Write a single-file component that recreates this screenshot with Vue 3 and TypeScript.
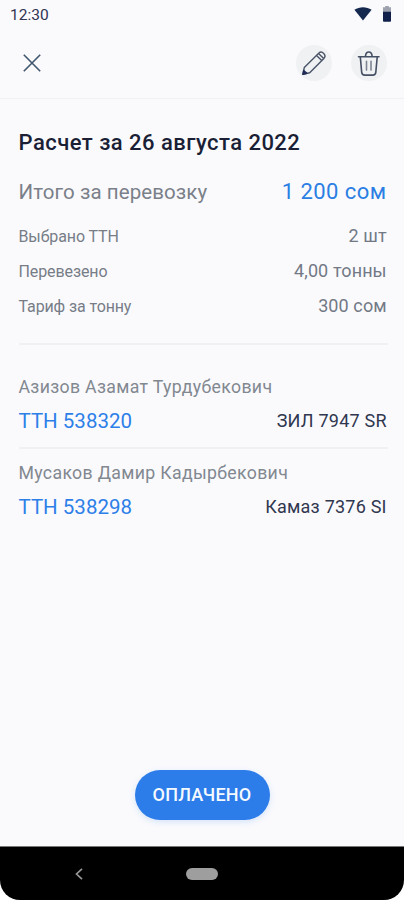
<script setup lang="ts">
interface Row { label: string; value: string; cls: string }
interface Waybill { driver: string; number: string; vehicle: string }

const rows: Row[] = [
  { label: 'Выбрано ТТН', value: '2 шт', cls: 'count' },
  { label: 'Перевезено', value: '4,00 тонны', cls: 'weight' },
  { label: 'Тариф за тонну', value: '300 сом', cls: 'rate' },
]

const waybills: Waybill[] = [
  { driver: 'Азизов Азамат Турдубекович', number: 'ТТН 538320', vehicle: 'ЗИЛ 7947 SR' },
  { driver: 'Мусаков Дамир Кадырбекович', number: 'ТТН 538298', vehicle: 'Камаз 7376 SI' },
]
</script>

<template>
  <div class="screen">
    <div class="status">
      <span class="time">12:30</span>
      <div class="status-icons">
        <svg class="wifi" width="18" height="14" viewBox="0 0 18 14"><path d="M0.4 2.8C5.4-.7 12.6-.7 17.6 2.8L9 13.4Z" fill="#15294f" /></svg>
        <svg class="battery" width="8" height="16" viewBox="0 0 8 16">
          <path d="M2.2 0h3.6v1.3H8V6H0V1.3h2.2z" fill="#9da2ae" />
          <path d="M0 5.7h8v9.1q0 .9-.9.9H.9Q0 15.700 0 14.800z" fill="#10204a" />
        </svg>
      </div>
    </div>

    <header class="toolbar">
      <button class="close" aria-label="Закрыть">
        <svg width="18" height="18" viewBox="0 0 18 18"><path d="M.8.8l16.400 16.400M17.200.8L.8 17.200" fill="none" stroke="#40566c" stroke-width="1.600" /></svg>
      </button>
      <div class="actions">
        <button class="round" aria-label="Изменить">
          <svg width="36" height="36" viewBox="0 0 36 36" fill="none" stroke="#4a5468" stroke-width="1.400" stroke-linejoin="round">
            <path d="M6.900 29.300l1.400-6.800L22.700 8.200q2.500-2.300 5 .2t.2 5L13.700 27.700z" />
            <path d="M20.500 10.400l5.200 5.200M22.500 8.400l5.200 5.200" />
            <path d="M6.900 29.300l.8-3.900 3.100 2.900z" fill="#202c58" stroke="#202c58" />
          </svg>
        </button>
        <button class="round" aria-label="Удалить">
          <svg width="36" height="36" viewBox="0 0 36 36" fill="none" stroke="#465064" stroke-width="1.600" stroke-linecap="round" stroke-linejoin="round">
            <path d="M7.500 11.700h20.500M14.500 11.300c.3-5.800 6.300-5.800 6.600 0" />
            <path d="M9.300 12l1.400 15.400q.3 2.700 3 2.700h8.100q2.700 0 3-2.700L26.200 12" />
            <path d="M15.500 16.200v8.900M20 16.200v8.900" stroke="#7d8591" />
          </svg>
        </button>
      </div>
    </header>

    <main class="content">
      <h1>Расчет за 26 августа 2022</h1>
      <div class="total">
        <span class="total-label">Итого за перевозку</span>
        <span class="total-value">1 200 сом</span>
      </div>
      <div v-for="row in rows" :key="row.label" class="row">
        <span class="label" :class="row.cls">{{ row.label }}</span>
        <span class="value">{{ row.value }}</span>
      </div>
      <section class="waybills">
        <article v-for="w in waybills" :key="w.number" class="waybill">
          <div class="driver">{{ w.driver }}</div>
          <div class="details">
            <span class="number">{{ w.number }}</span>
            <span class="vehicle">{{ w.vehicle }}</span>
          </div>
        </article>
      </section>
    </main>

    <button class="pay">ОПЛАЧЕНО</button>

    <div class="nav-wrap">
      <nav class="nav">
        <svg class="back" width="8" height="12" viewBox="0 0 8 12"><path d="M7 .8L1.500 6 7 11.200" fill="none" stroke="#969696" stroke-width="1.700" /></svg>
        <span class="home"></span>
      </nav>
    </div>
  </div>
</template>

<style>
body { background: #fff; }
</style>

<style scoped>
* { box-sizing: border-box; }
.screen {
  width: 404px;
  height: 900px;
  display: flex;
  flex-direction: column;
  background: #fafafd;
  font-family: Roboto, sans-serif;
  white-space: nowrap;
  overflow: hidden;
}
button { border: 0; padding: 0; font-family: inherit; }
svg { display: block; }
.status {
  height: 28px;
  flex: none;
  display: flex;
  justify-content: space-between;
  padding: 6px 13px 0 10px;
}
.time { font-size: 15.500px; line-height: 18px; color: #303352; }
.status-icons { display: flex; gap: 11px; }
.wifi { margin-top: 1px; }
.toolbar {
  height: 71px;
  flex: none;
  display: flex;
  align-items: center;
  justify-content: space-between;
  padding: 0 17px 0 23px;
  border-bottom: 1px solid #f0f1f4;
}
.close { background: none; }
.actions { display: flex; gap: 19px; }
.round { width: 36px; height: 36px; border-radius: 50%; background: #eff1f3; }
.content { flex: none; padding: 30px 16px 0 18.500px; }
h1 {
  margin: 0;
  font-size: 22px;
  line-height: 28px;
  font-weight: 500;
  letter-spacing: 0.46px;
  color: #1b1f36;
}
.total {
  display: flex;
  justify-content: space-between;
  align-items: baseline;
  height: 28px;
  margin: 21px 0 16px;
  padding-right: 1.500px;
  line-height: 28px;
}
.total-label { font-size: 20.500px; letter-spacing: 0.08px; color: #7a8089; }
.total-value { font-size: 22px; letter-spacing: 0.45px; color: #2b7ee3; }
.row {
  display: flex;
  justify-content: space-between;
  align-items: baseline;
  height: 35px;
  padding-right: 1.300px;
  line-height: 28px;
}
.label { font-size: 16px; letter-spacing: -0.1px; color: #777d87; }
.label.rate { letter-spacing: -0.12px; }
.value { font-size: 18px; letter-spacing: 0.1px; color: #727985; }
.waybills {
  margin: 16px 0 0 0.5px;
  padding-top: 22px;
  border-top: 2px solid #f0f1f4;
}
.waybill { height: 80px; }
.waybill + .waybill { border-top: 2px solid #f0f1f4; padding-top: 4px; height: 86px; }
.driver {
  margin-left: -0.5px;
  height: 32px;
  line-height: 40px;
  font-size: 17.700px;
  letter-spacing: 0.33px;
  color: #828890;
}
.details {
  display: flex;
  justify-content: space-between;
  align-items: flex-start;
  margin-left: -0.5px;
  padding-right: 1.300px;
  line-height: 44px;
}
.number { font-size: 20.500px; color: #2d7fe8; }
.vehicle { font-size: 18px; letter-spacing: 0.22px; color: #30374f; }
.pay {
  width: 135px;
  height: 50px;
  margin: auto auto 26px;
  padding-bottom: 1px;
  flex: none;
  border-radius: 25px;
  background: #2c7dea;
  box-shadow: 0 2px 6px rgba(44, 125, 234, 0.18);
  color: #f5faff;
  font-size: 18px;
  font-weight: 500;
  letter-spacing: 0.2px;
}
.nav-wrap { flex: none; background: #fff; }
.nav {
  height: 54px;
  display: grid;
  grid-template-columns: 1fr 32px 1fr;
  align-items: center;
  border-top: 1px solid #777;
  border-radius: 0 0 20px 20px;
  background: #000;
}
.back { margin-left: 75px; }
.home { height: 12px; border-radius: 6px; background: #9e9e9e; }
</style>
